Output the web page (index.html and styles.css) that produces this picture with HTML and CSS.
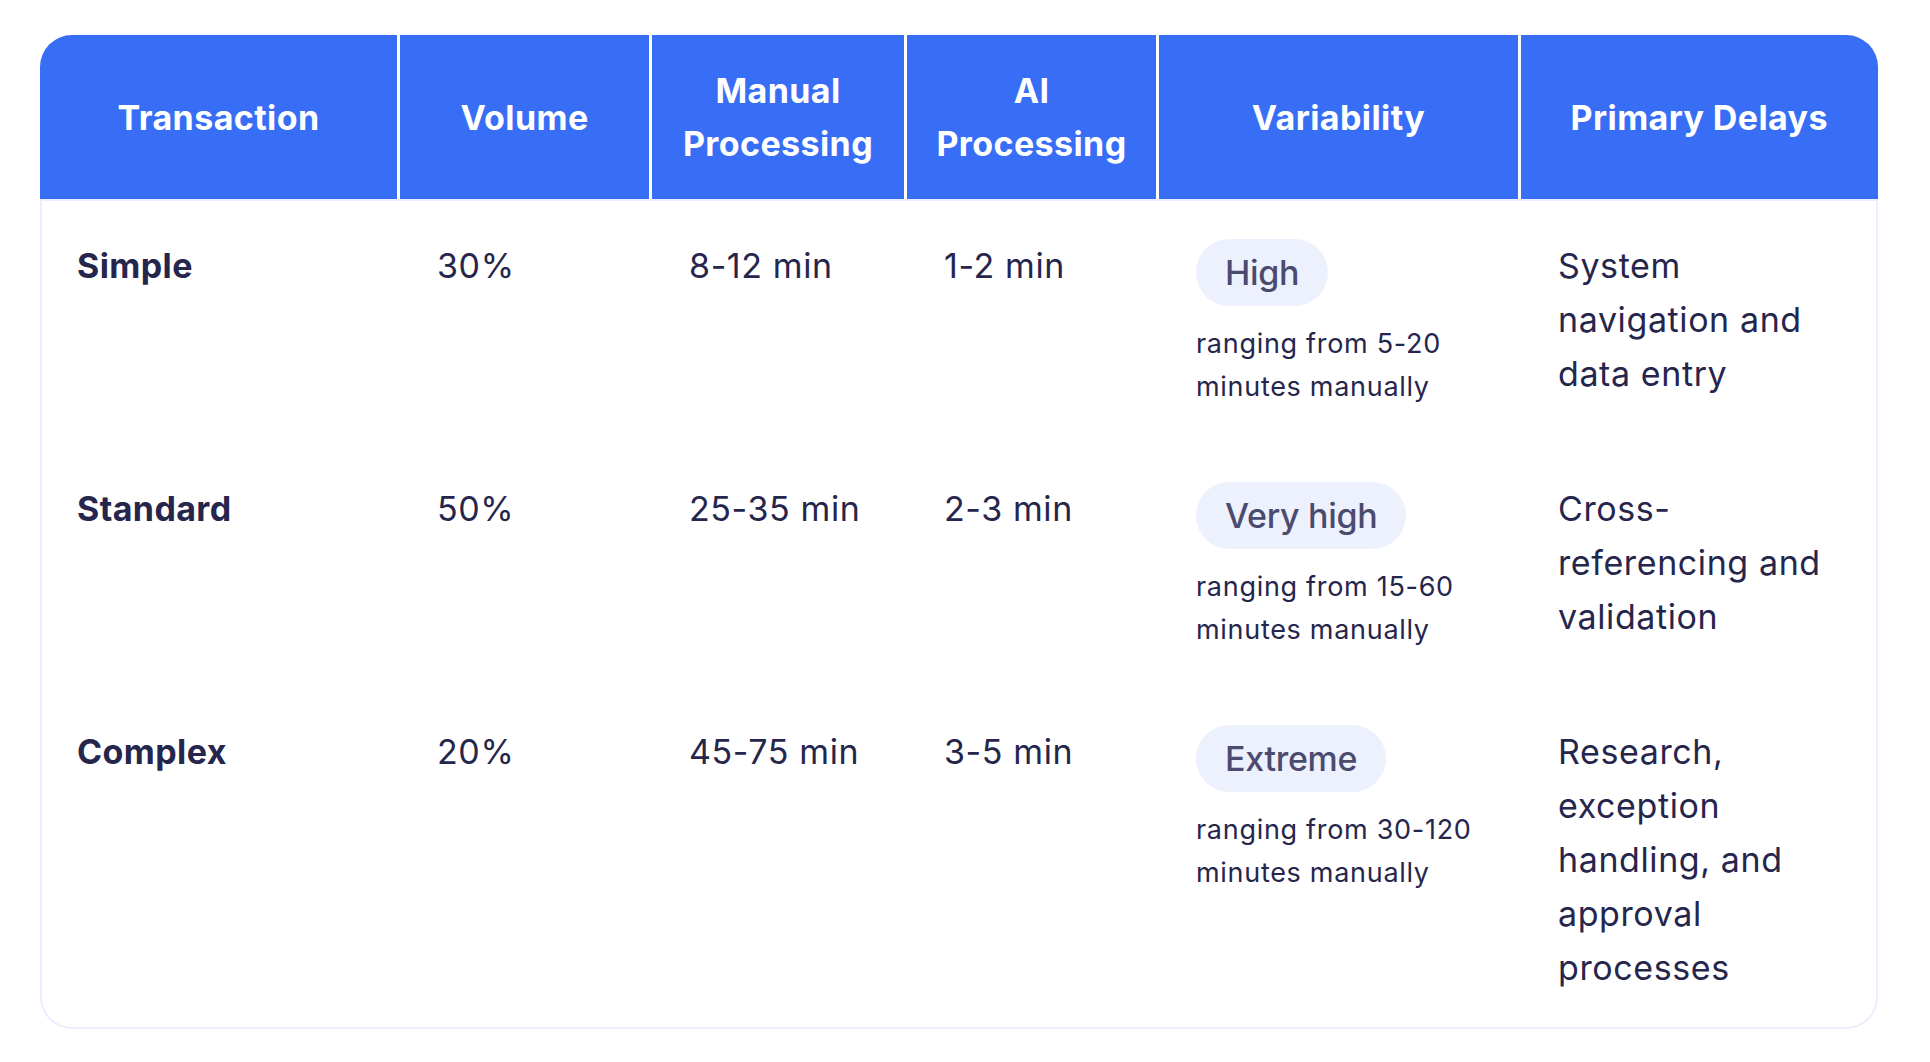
FILE: index.html
```html
<!DOCTYPE html>
<html lang="en">
<head>
<meta charset="utf-8">
<title>Transaction processing comparison</title>
<link rel="stylesheet" href="styles.css">
</head>
<body>
<div class="page">
  <div class="table" role="table">
    <div class="head" role="row">
      <div class="th" role="columnheader">Transaction</div>
      <div class="th" role="columnheader">Volume</div>
      <div class="th" role="columnheader">Manual Processing</div>
      <div class="th" role="columnheader">AI Processing</div>
      <div class="th" role="columnheader">Variability</div>
      <div class="th" role="columnheader">Primary Delays</div>
    </div>
    <div class="body">
      <div class="row" role="row">
        <div class="td name" role="cell">Simple</div>
        <div class="td" role="cell">30%</div>
        <div class="td" role="cell">8-12 min</div>
        <div class="td" role="cell">1-2 min</div>
        <div class="td" role="cell">
          <span class="badge">High</span>
          <div class="note">ranging from 5-20 minutes manually</div>
        </div>
        <div class="td" role="cell">System navigation and data entry</div>
      </div>
      <div class="row" role="row">
        <div class="td name" role="cell">Standard</div>
        <div class="td" role="cell">50%</div>
        <div class="td" role="cell">25-35 min</div>
        <div class="td" role="cell">2-3 min</div>
        <div class="td" role="cell">
          <span class="badge">Very high</span>
          <div class="note">ranging from 15-60 minutes manually</div>
        </div>
        <div class="td" role="cell">Cross-referencing and validation</div>
      </div>
      <div class="row" role="row">
        <div class="td name" role="cell">Complex</div>
        <div class="td" role="cell">20%</div>
        <div class="td" role="cell">45-75 min</div>
        <div class="td" role="cell">3-5 min</div>
        <div class="td" role="cell">
          <span class="badge">Extreme</span>
          <div class="note">ranging from 30-120 minutes manually</div>
        </div>
        <div class="td" role="cell">Research, exception handling, and approval processes</div>
      </div>
    </div>
  </div>
</div>
</body>
</html>
```

FILE: styles.css
```css
* { box-sizing: border-box; }

html, body {
  margin: 0;
  padding: 0;
  background: #ffffff;
}

body {
  font-family: Inter, "Noto Sans", "Liberation Sans", sans-serif;
  color: #26264d;
}

.page {
  padding: 35px 52px 0 40px;
}

.table {
  width: 1838px;
}

.head,
.row {
  display: grid;
  grid-template-columns: 357px 249px 252px 249px 359px 356.5px;
  column-gap: 3px;
}

.head {
  border-radius: 32px 32px 0 0;
  overflow: hidden;
}

.th {
  background: #386ef6;
  color: #ffffff;
  font-weight: 700;
  font-size: 34px;
  line-height: 53px;
  letter-spacing: 0.4px;
  text-align: center;
  padding: 29px 22px;
  min-height: 164px;
  display: flex;
  align-items: center;
  justify-content: center;
}

.body {
  border-radius: 0 0 32px 32px;
  box-shadow: inset 0 0 0 2px #ebeefd;
}

.td {
  font-size: 34px;
  line-height: 54px;
  letter-spacing: 0.6px;
  padding: 40px 37px 34px 37px;
}

.name {
  font-weight: 700;
  letter-spacing: 0.4px;
}

.badge {
  display: inline-block;
  background: #edf0fd;
  color: #4a4b6f;
  font-weight: 500;
  font-size: 34px;
  line-height: 54px;
  letter-spacing: -0.3px;
  padding: 6.5px 29px;
  border-radius: 34px;
}

.note {
  margin-top: 16px;
  font-size: 27px;
  line-height: 43px;
  letter-spacing: 0.7px;
}
```
